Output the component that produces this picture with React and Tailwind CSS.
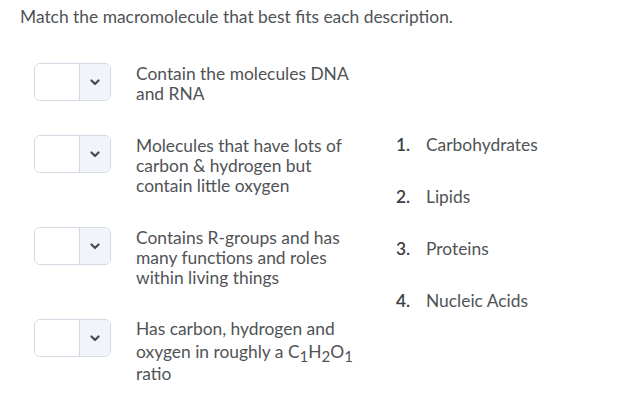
import React from 'react';

const rows = [
  { id: 1, lines: ['Contain the molecules DNA', 'and RNA'] },
  { id: 2, text: 'Molecules that have lots of carbon & hydrogen but contain little oxygen' },
  { id: 3, text: 'Contains R-groups and has many functions and roles within living things' },
  { id: 4, ratio: true },
];

const answers = ['Carbohydrates', 'Lipids', 'Proteins', 'Nucleic Acids'];

const Chevron = () => (
  <svg width="10" height="7" viewBox="0 0 10 7" className="block">
    <path d="M1.5 1.5 L5 5 L8.5 1.5" fill="none" stroke="#494c4e" strokeWidth="2.2" strokeLinecap="round" strokeLinejoin="round" />
  </svg>
);

const SelectBox = () => (
  <div className="flex h-[38px] w-[77px] shrink-0 overflow-hidden rounded-md border border-[#d3d9e3] bg-white">
    <div className="w-[44px] bg-white" />
    <div className="flex flex-1 items-center justify-center border-l border-[#d3d9e3] bg-[#f1f5fb]">
      <Chevron />
    </div>
  </div>
);

const Sub = ({ children }) => (
  <span className="relative top-[4px] text-[15px] leading-[0]">{children}</span>
);

const App = () => {
  return (
    <div className="min-h-[410px] w-[627px] bg-white font-['Lato','Open_Sans',sans-serif] text-[17.4px] text-[#505356]">
      <div className="px-5 pt-[5px]">
        <p className="leading-6">Match the macromolecule that best fits each description.</p>
      </div>

      <div className="flex pl-[34px] pt-[34px]">
        {/* Descriptions */}
        <div className="flex flex-col gap-[31px]">
          {rows.map((row) => (
            <div key={row.id} className="flex items-start gap-[25px]">
              <SelectBox />
              <div className="w-[236px] pt-px leading-5">
                {row.lines && row.lines.map((l) => <div key={l}>{l}</div>)}
                {row.text && <p>{row.text}</p>}
                {row.ratio && (
                  <p className="-mt-[2px] leading-[22.5px]">
                    Has carbon, hydrogen and oxygen in roughly a C<Sub>1</Sub>H<Sub>2</Sub>O<Sub>1</Sub> ratio
                  </p>
                )}
              </div>
            </div>
          ))}
        </div>

        {/* Answer list */}
        <ol className="ml-[24px] flex flex-col gap-8 pt-[72px]">
          {answers.map((a, i) => (
            <li key={a} className="flex leading-5">
              <span className="w-[30px] font-semibold text-[#3d4043]">{i + 1}.</span>
              <span>{a}</span>
            </li>
          ))}
        </ol>
      </div>
    </div>
  );
};

export default App;
